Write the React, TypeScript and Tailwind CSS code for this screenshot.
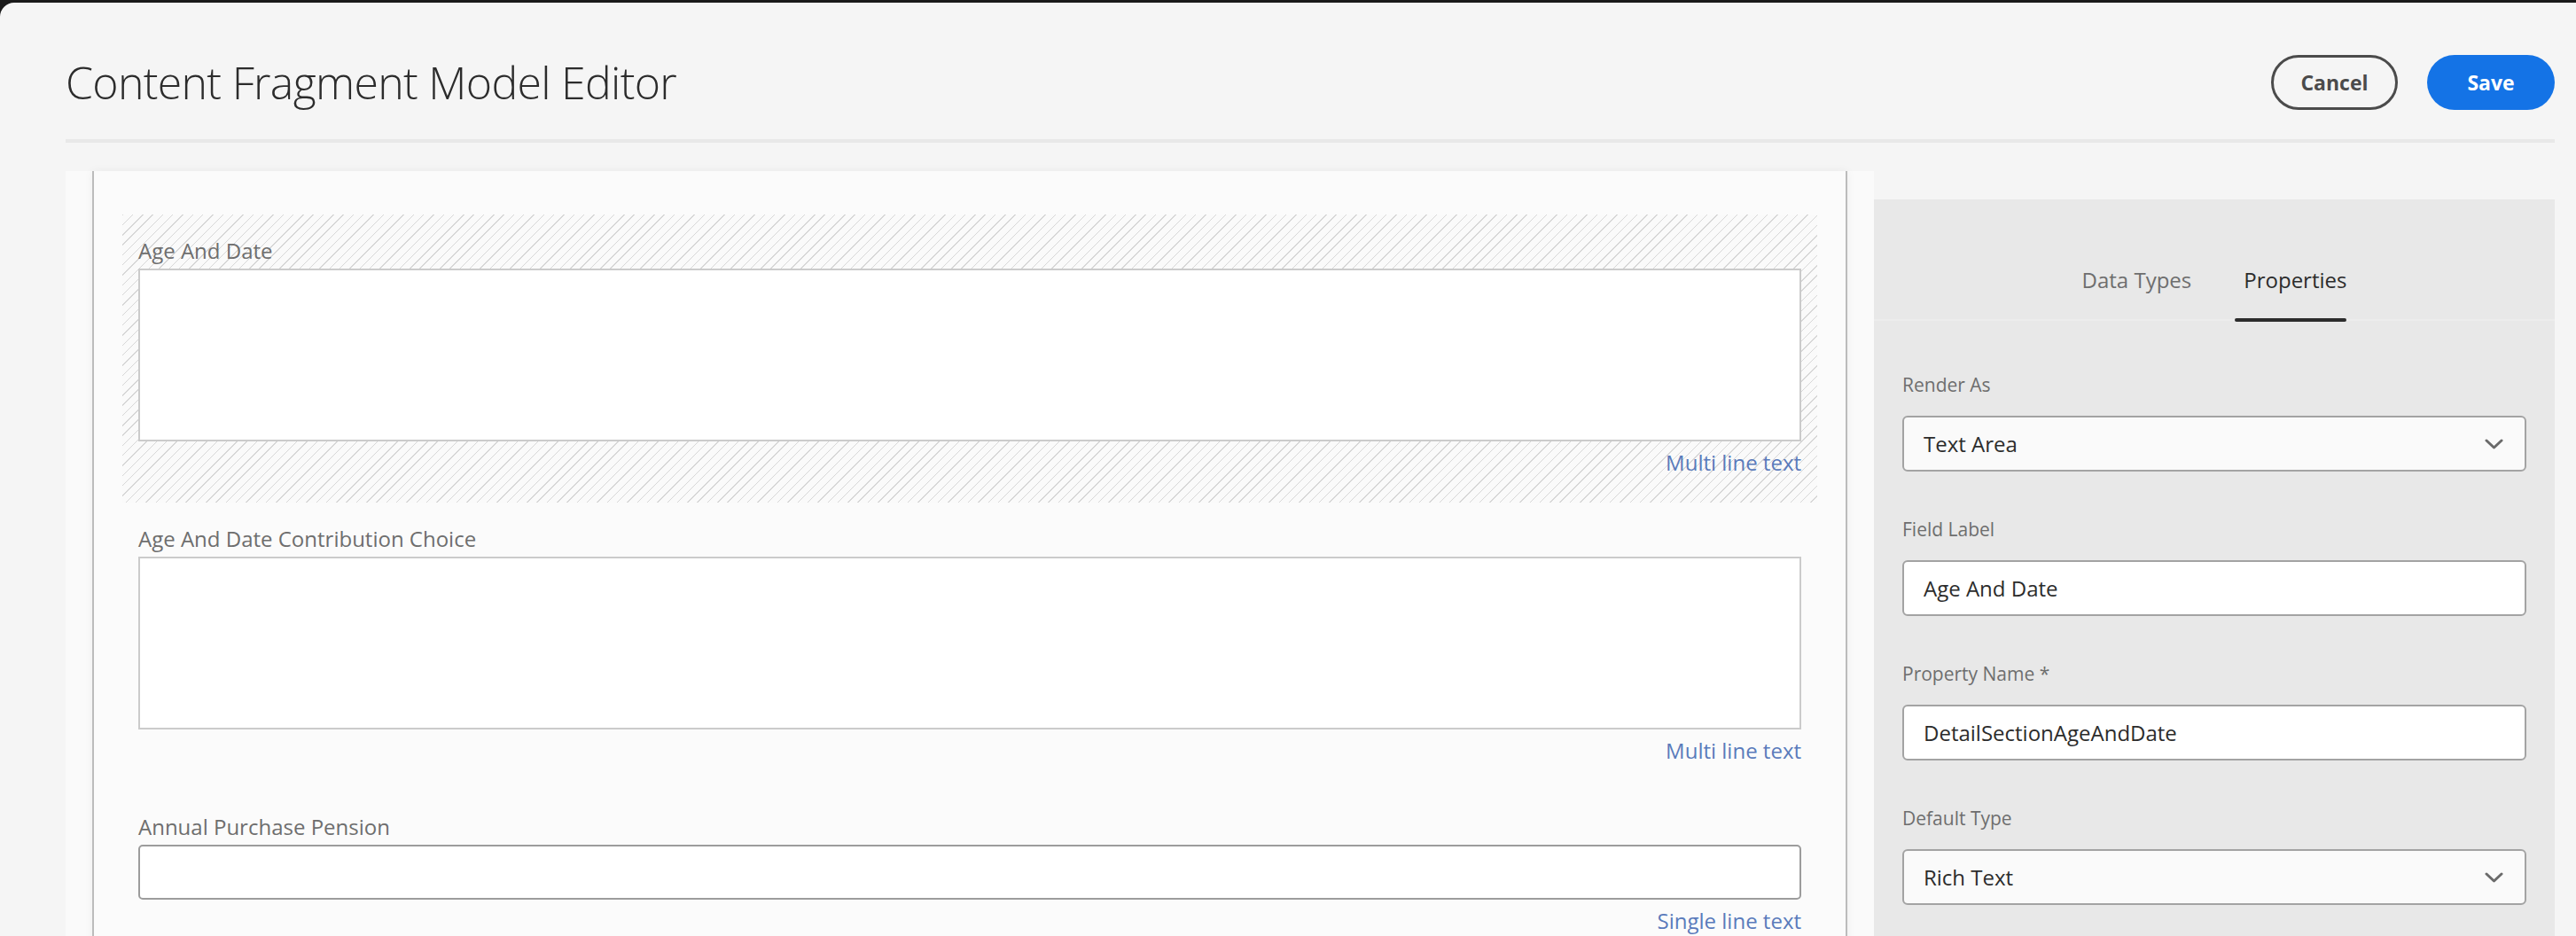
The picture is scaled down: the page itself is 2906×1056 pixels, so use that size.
import React from "react";

function Chevron() {
  return (
    <svg width="21" height="12" viewBox="0 0 21 12" fill="none">
      <path d="M2 2 L10.5 10 L19 2" stroke="#6a6a6a" strokeWidth="3" strokeLinecap="round" strokeLinejoin="round" />
    </svg>
  );
}

function CanvasField({
  label,
  hint,
  kind,
  selected,
}: {
  label: string;
  hint: string;
  kind: "multi" | "single";
  selected?: boolean;
}) {
  return (
    <div
      className={
        selected
          ? "pt-[26px] pb-[30px] px-[18px] bg-[#fafafa] bg-[repeating-linear-gradient(135deg,#d7d7d7_0px,#d7d7d7_1px,transparent_1px,transparent_8px)]"
          : "pt-[26px] pb-[30px] px-[18px]"
      }
    >
      <div className="h-[30px] leading-[30px] text-[24px] text-[#6e6e6e] mb-[5px]">{label}</div>
      {kind === "multi" ? (
        <div className="h-[195px] border-2 border-[#cbcbcb] bg-white" />
      ) : (
        <div className="h-[62px] rounded-[5px] border-2 border-[#9c9c9c] bg-white" />
      )}
      <div className="mt-[9px] h-[30px] leading-[30px] text-[24px] text-[#5a7bbb] text-right">{hint}</div>
    </div>
  );
}

function PropField({
  label,
  value,
  select,
}: {
  label: string;
  value: string;
  select?: boolean;
}) {
  return (
    <div className="mb-[52px]">
      <div className="h-[26px] leading-[26px] text-[21px] text-[#6e6e6e] mb-[22px]">{label}</div>
      <div
        className={
          select
            ? "h-[63px] rounded-[6px] border-2 border-[#a3a3a3] bg-[#fafafa] flex items-center justify-between pl-[22px] pr-[24px]"
            : "h-[63px] rounded-[6px] border-2 border-[#a3a3a3] bg-white flex items-center pl-[22px] pr-[24px]"
        }
      >
        <span className="text-[24px] text-[#2c2c2c]">{value}</span>
        {select ? <Chevron /> : null}
      </div>
    </div>
  );
}

export default function App() {
  return (
    <div className="w-[2906px] h-[1056px] overflow-hidden bg-[#1a1a1a] pt-[3px] font-['Open_Sans',sans-serif]">
      <div className="h-full bg-[#f5f5f5] rounded-tl-[16px] pl-[74px] pr-[24px] overflow-hidden">
        <div className="flex items-center justify-between pt-[59px] pb-[33px] border-b-[4px] border-[#e8e8e8]">
          <h1 className="text-[50px] font-light tracking-[-0.7px] leading-[62px] text-[#2c2c2c]">
            Content Fragment Model Editor
          </h1>
          <div className="flex items-center gap-[33px]">
            <button className="w-[143px] h-[62px] rounded-full border-[3px] border-[#4b4b4b] text-[23px] font-bold text-[#4b4b4b]">
              Cancel
            </button>
            <button className="w-[144px] h-[62px] rounded-full bg-[#1473e6] text-[23px] font-bold text-white">
              Save
            </button>
          </div>
        </div>

        <div className="flex mt-[32px] h-[900px]">
          <div className="w-[2040px] h-full bg-[#fafafa] px-[30px]">
            <div className="h-full border-x-2 border-[#bcbcbc] bg-[#fbfbfb] shadow-[0_0_10px_rgba(0,0,0,0.05)] px-[32px] pt-[49px]">
              <CanvasField label="Age And Date" hint="Multi line text" kind="multi" selected />
              <CanvasField label="Age And Date Contribution Choice" hint="Multi line text" kind="multi" />
              <CanvasField label="Annual Purchase Pension" hint="Single line text" kind="single" />
            </div>
          </div>

          <div className="flex-1 mt-[32px] bg-[#e8e8e8]">
            <div className="h-[137px] border-b-2 border-[#ececec] pt-[76px] flex justify-center gap-[59px]">
              <div className="h-[30px] leading-[30px] text-[24px] text-[#6e6e6e]">Data Types</div>
              <div className="relative h-[30px] leading-[30px] text-[24px] text-[#2c2c2c]">
                Properties
                <div className="absolute left-[-10px] right-0 top-[58px] h-[4px] rounded-full bg-[#2c2c2c]" />
              </div>
            </div>
            <div className="px-[32px] pt-[59px]">
              <PropField label="Render As" value="Text Area" select />
              <PropField label="Field Label" value="Age And Date" />
              <PropField label="Property Name *" value="DetailSectionAgeAndDate" />
              <PropField label="Default Type" value="Rich Text" select />
            </div>
          </div>
        </div>
      </div>
    </div>
  );
}
